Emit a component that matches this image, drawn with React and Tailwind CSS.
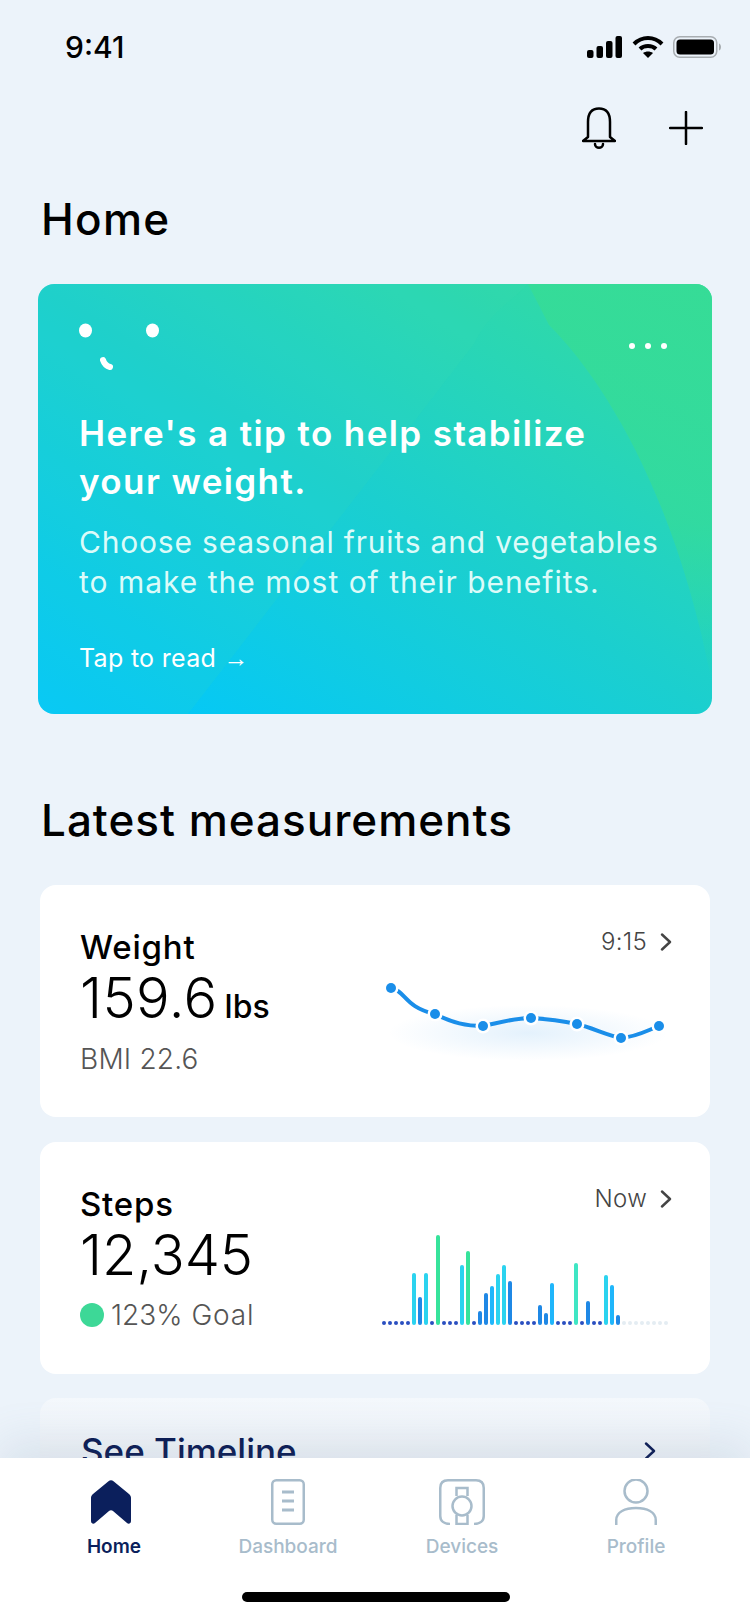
const font = { fontFamily: 'Inter, sans-serif' }

const BLUE = 'bg-[#1f88e5]'
const SKY = 'bg-[#1fb6fb]'
const CYAN = 'bg-[#2bd3ef]'
const GREEN = 'bg-[#36e39b]'
const MINT = 'bg-[#3fe6c4]'
const DOT = 'bg-[#2a4fc0]'
const EMPTY = 'bg-[#e4edf3]'

// [height in px, colour], 6px per slot
const steps = [
  [4, DOT], [4, DOT], [4, DOT], [4, DOT], [4, DOT],
  [52, CYAN], [28, BLUE], [52, CYAN], [4, DOT], [90, GREEN],
  [4, DOT], [4, DOT], [4, DOT], [60, CYAN], [74, GREEN],
  [4, DOT], [14, BLUE], [32, BLUE], [39, SKY], [51, CYAN],
  [60, CYAN], [44, BLUE], [4, DOT], [4, DOT], [4, DOT],
  [4, DOT], [20, BLUE], [12, BLUE], [42, SKY], [4, DOT],
  [4, DOT], [4, DOT], [62, MINT], [4, DOT], [24, BLUE],
  [4, DOT], [4, DOT], [50, CYAN], [40, SKY], [10, BLUE],
  [4, EMPTY], [4, EMPTY], [4, EMPTY], [4, EMPTY], [4, EMPTY], [4, EMPTY], [4, EMPTY], [4, EMPTY],
]

const linePoints = [[13, 13], [57, 39], [105, 51], [153, 43], [199, 49], [243, 63], [281, 51]]

function Chevron({ className }) {
  return (
    <svg width="12" height="18" viewBox="0 0 12 18" fill="none" stroke="currentColor" strokeWidth="2.4" strokeLinecap="round" strokeLinejoin="round" className={className}>
      <path d="M2 1.5 L10 9 L2 16.5" />
    </svg>
  )
}

function StatusBar() {
  return (
    <div className="flex h-[94px] items-center justify-between pl-[65px] pr-[29px]">
      <span className="text-[30px] font-medium leading-none text-black">9:41</span>
      <div className="flex items-center gap-[9px]">
        <svg width="36" height="22" viewBox="0 0 36 22" fill="#000">
          <rect x="0" y="14" width="6.5" height="8" rx="2" />
          <rect x="9.5" y="10" width="6.5" height="12" rx="2" />
          <rect x="19" y="5" width="6.5" height="17" rx="2" />
          <rect x="28.5" y="0" width="6.5" height="22" rx="2" />
        </svg>
        <svg width="32" height="22" viewBox="0 0 32 22" fill="none" stroke="#000" strokeWidth="4">
          <path d="M2 8 C10 0 22 0 30 8" />
          <path d="M8 13 C12 9 20 9 24 13" />
          <path d="M16 22 L11 17 C14 15 18 15 21 17 Z" fill="#000" stroke="none" />
        </svg>
        <svg width="48" height="22" viewBox="0 0 48 22" fill="none">
          <rect x="0.75" y="0.75" width="43" height="20.5" rx="6" stroke="#a8adb1" strokeWidth="1.5" />
          <rect x="3.5" y="3.5" width="37.5" height="15" rx="3.5" fill="#000" />
          <path d="M46 7.5 C47.5 8 48 9.5 48 11 C48 12.5 47.5 14 46 14.5 Z" fill="#a8adb1" />
        </svg>
      </div>
    </div>
  )
}

function HeroCard() {
  return (
    <div className="relative mx-[38px] h-[430px] w-[674px] overflow-hidden rounded-[16px] bg-gradient-to-tr from-[#02c6ff] via-[#1bcfcf] to-[#36dc9a]">
      <svg className="absolute inset-0" width="674" height="430" viewBox="0 0 674 430">
        <defs>
          <linearGradient id="leaf" x1="0" y1="0" x2="0" y2="1">
            <stop offset="0" stopColor="#36dc96" stopOpacity="0.85" />
            <stop offset="0.6" stopColor="#36dc96" stopOpacity="0.7" />
            <stop offset="1" stopColor="#36dc96" stopOpacity="0" />
          </linearGradient>
        </defs>
        <path d="M0 0 H490 C470 20 450 30 436 60 L150 430 H0 Z" fill="#3fe0b0" opacity="0.12" />
        <path d="M490 0 H674 V400 C640 220 570 100 511 41 Z" fill="url(#leaf)" />
      </svg>
      <div className="relative px-[41px]">
        <div className="flex items-start justify-between pt-[39px]">
          <svg width="80" height="48" viewBox="0 0 80 48" fill="#fff">
            <ellipse cx="6.5" cy="7.5" rx="6.5" ry="7" />
            <ellipse cx="73.5" cy="7.5" rx="6.5" ry="7" />
            <path d="M24 37 C25 40 27 43 31 44" stroke="#fff" strokeWidth="6" strokeLinecap="round" fill="none" />
          </svg>
          <div className="mr-[4px] mt-[20px] flex gap-[10px]">
            <span className="h-[6px] w-[6px] rounded-full bg-white" />
            <span className="h-[6px] w-[6px] rounded-full bg-white" />
            <span className="h-[6px] w-[6px] rounded-full bg-white" />
          </div>
        </div>
        <h2 className="mt-[38px] text-[35px] font-semibold leading-[48px] tracking-[1.4px] text-white">
          Here's a tip to help stabilize
          <br />
          your weight.
        </h2>
        <p className="mt-[17px] text-[30px] font-normal leading-[40px] tracking-[0.8px] text-[#dcfbf9]">
          Choose seasonal fruits and vegetables
          <br />
          <span className="tracking-[1px]">to make the most of their benefits.</span>
        </p>
        <p className="mt-[40px] text-[25px] font-normal leading-[32px] tracking-[0.3px] text-white">
          Tap to read <span className="font-['Liberation_Sans']">→</span>
        </p>
      </div>
    </div>
  )
}

function CardLink({ label }) {
  return (
    <div className="flex items-center justify-end gap-[13px] pr-[38px] text-[24px] font-light leading-[30px] tracking-[0.3px] text-[#444]">
      <span>{label}</span>
      <Chevron />
    </div>
  )
}

function WeightChart() {
  return (
    <svg width="300" height="110" viewBox="0 0 300 110" fill="none">
      <defs>
        <radialGradient id="glow">
          <stop offset="0" stopColor="#1e8ee8" stopOpacity="0.12" />
          <stop offset="1" stopColor="#1e8ee8" stopOpacity="0" />
        </radialGradient>
      </defs>
      <ellipse cx="150" cy="58" rx="140" ry="28" fill="url(#glow)" />
      <path
        d="M13 13 C28 16 26 32 57 39 C75 48 88 51 105 51 C120 48 136 43 153 43 C170 44 185 46 199 49 C215 53 228 60 243 63 C258 62 268 56 281 51"
        stroke="#1a8ee9"
        strokeWidth="4"
      />
      {linePoints.map(([x, y]) => (
        <circle key={x} cx={x} cy={y} r="7.5" fill="#fff" />
      ))}
      {linePoints.map(([x, y]) => (
        <circle key={x} cx={x} cy={y} r="5" fill="#1a8ee9" />
      ))}
    </svg>
  )
}

function StepsChart() {
  return (
    <div className="flex h-[92px] items-end gap-[2px]">
      {steps.map(([h, color], i) => (
        <div key={i} className={`w-[4px] rounded-full ${color}`} style={{ height: h }} />
      ))}
    </div>
  )
}

function WeightCard() {
  return (
    <div className="mx-[40px] flex h-[232px] justify-between rounded-[16px] bg-white">
      <div className="pl-[40px] pt-[42px]">
        <div className="text-[33px] font-medium leading-[40px] tracking-[0.8px] text-black">Weight</div>
        <div className="mt-[1px] flex items-baseline gap-[7px] leading-[60px] text-black">
          <span className="text-[56px] font-light tracking-[0.4px]">159.6</span>
          <span className="text-[32px] font-medium">lbs</span>
        </div>
        <div className="mt-[4px] text-[28px] font-light leading-[36px] tracking-[0.2px] text-[#555]">BMI 22.6</div>
      </div>
      <div className="w-[332px] pt-[42px]">
        <CardLink label="9:15" />
        <div className="mt-[18px]">
          <WeightChart />
        </div>
      </div>
    </div>
  )
}

function StepsCard() {
  return (
    <div className="mx-[40px] mt-[25px] flex h-[232px] justify-between rounded-[16px] bg-white">
      <div className="pl-[40px] pt-[42px]">
        <div className="text-[33px] font-medium leading-[40px] tracking-[0.8px] text-black">Steps</div>
        <div className="mt-[1px] text-[56px] font-light leading-[60px] text-black">12,345</div>
        <div className="mt-[12px] flex items-center gap-[7px] text-[28px] font-light leading-[36px] text-[#555]">
          <span className="h-[24px] w-[24px] rounded-full bg-[#3dd897]" />
          <span>123%</span>
          <span className="ml-[2px] tracking-[0.8px]">Goal</span>
        </div>
      </div>
      <div className="w-[328px] pt-[42px]">
        <CardLink label="Now" />
        <div className="mt-[19px]">
          <StepsChart />
        </div>
      </div>
    </div>
  )
}

function TimelineCard() {
  return (
    <div className="mx-[40px] mt-[24px] flex h-[120px] items-start justify-between rounded-[16px] bg-gradient-to-b from-[#f4f8fc] to-[#e6ebf2] pl-[41px] pr-[54px] pt-[33px]">
      <span className="text-[35px] font-medium leading-[40px] text-[#061650]">See Timeline</span>
      <Chevron className="mt-[11px] text-[#061650]" />
    </div>
  )
}

function NavItem({ label, active, children }) {
  return (
    <div className="flex flex-col items-center">
      <div className="flex h-[48px] items-center justify-center">{children}</div>
      <span className={`mt-[9px] text-[19px] leading-[24px] ${active ? 'font-semibold text-[#0b1f5c]' : 'font-medium text-[#a8bccb]'}`}>
        {label}
      </span>
    </div>
  )
}

function BottomNav() {
  return (
    <div className="relative h-[166px] bg-white shadow-[0_-16px_40px_rgba(120,140,170,0.16)]">
      <div className="grid grid-cols-4 px-[27px] pt-[20px]">
        <NavItem label="Home" active>
          <svg width="40" height="44" viewBox="0 0 40 44" fill="#0b1f5c" className="-ml-[6px]">
            <path d="M17.5 1.2 C19 0 21 0 22.5 1.2 L38 14 C39.5 15.2 40 16.5 40 18 V41 C40 43.5 37.5 44.5 36 43 L22 31 C21 30 19 30 18 31 L4 43 C2.5 44.5 0 43.5 0 41 V18 C0 16.5 0.5 15.2 2 14 Z" />
          </svg>
        </NavItem>
        <NavItem label="Dashboard">
          <svg width="34" height="46" viewBox="0 0 34 46" fill="none" stroke="#a8bccb" strokeWidth="2.5">
            <rect x="1.25" y="1.25" width="31.5" height="43.5" rx="4" />
            <path d="M11 13 H23 M11 22 H23 M11 31 H23" strokeWidth="3" />
          </svg>
        </NavItem>
        <NavItem label="Devices">
          <svg width="46" height="46" viewBox="0 0 46 46" fill="none" stroke="#a8bccb" strokeWidth="2.5">
            <path d="M11 45 C5 45 1.25 42 1.25 37 V9 C1.25 4 4 1.25 9 1.25 H37 C42 1.25 44.75 4 44.75 9 V37 C44.75 42 41 45 35 45" />
            <path d="M17.5 17 V9 H28.5 V17 M17.5 36 V45 H28.5 V36" />
            <ellipse cx="23" cy="27" rx="9.5" ry="9.5" />
          </svg>
        </NavItem>
        <NavItem label="Profile">
          <svg width="42" height="46" viewBox="0 0 42 46" fill="none" stroke="#a8bccb" strokeWidth="2.5">
            <ellipse cx="21" cy="12" rx="11.5" ry="11.5" />
            <path d="M1.25 46 V41 C1.25 33 10 29 21 29 C32 29 40.75 33 40.75 41 V46" />
          </svg>
        </NavItem>
      </div>
      <div className="absolute bottom-[22px] left-[242px] h-[10px] w-[268px] rounded-full bg-black" />
    </div>
  )
}

export default function App() {
  return (
    <div className="flex h-[1624px] w-[750px] flex-col overflow-hidden bg-[#ecf3fa]" style={font}>
      <div className="min-h-0 flex-1 overflow-hidden">
        <StatusBar />
        <div className="flex justify-end gap-[53px] pr-[47px] pt-[13px]">
          <svg width="34" height="42" viewBox="0 0 34 42" fill="none" stroke="#000" strokeWidth="2.5" strokeLinecap="round">
            <path d="M6 30 V15 C6 6 10 1.5 17 1.5 C24 1.5 28 6 28 15 V30 L33 34 H1 Z" strokeLinejoin="round" />
            <path d="M13 37 C13 42 21 42 21 37" />
          </svg>
          <svg width="34" height="34" viewBox="0 0 34 34" fill="none" stroke="#000" strokeWidth="2.5" strokeLinecap="round" className="mt-[4px]">
            <path d="M17 1 V33 M1 17 H33" />
          </svg>
        </div>
        <h1 className="ml-[41px] mt-[45px] text-[44px] font-medium leading-[50px] tracking-[1.3px] text-black">Home</h1>
        <div className="mt-[40px]">
          <HeroCard />
        </div>
        <h2 className="ml-[41px] mt-[81px] text-[44px] font-medium leading-[50px] tracking-[1px] text-black">Latest measurements</h2>
        <div className="mt-[40px]">
          <WeightCard />
          <StepsCard />
          <TimelineCard />
        </div>
      </div>
      <BottomNav />
    </div>
  )
}
